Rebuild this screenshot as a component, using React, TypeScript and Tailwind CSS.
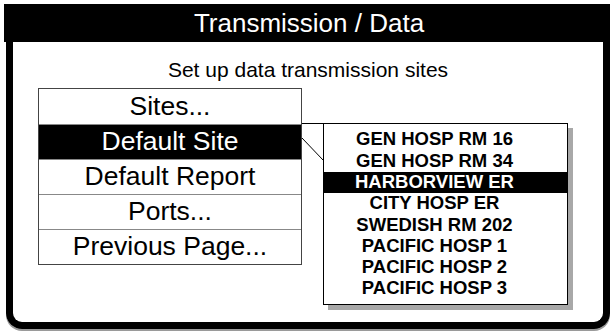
const menu = ["Sites...", "Default Site", "Default Report", "Ports...", "Previous Page..."];
const sites = [
  "GEN HOSP RM 16",
  "GEN HOSP RM 34",
  "HARBORVIEW ER",
  "CITY HOSP ER",
  "SWEDISH RM 202",
  "PACIFIC HOSP 1",
  "PACIFIC HOSP 2",
  "PACIFIC HOSP 3",
];

export default function App() {
  return (
    <div className="relative h-[331px] w-[610px] overflow-hidden bg-white font-['Liberation_Sans',Arial,sans-serif] text-black">
      <div className="ml-[4px] mt-[4px] flex h-[38px] w-[606px] items-center justify-center bg-black pl-[4px] text-[26px] text-white">
        Transmission / Data
      </div>
      <div className="ml-[6px] h-[287px] w-[604px] rounded-b-[16px] border-x-[7px] border-b-[7px] border-black shadow-[0_2px_0_#9a9a9a]">
        <div className="pt-[16px] text-center text-[21px] leading-[24px]">Set up data transmission sites</div>
        <div className="ml-[25px] mt-[6px] w-[264px] border border-[#444]">
          {menu.map((m, i) => (
            <div
              key={m}
              className={
                "flex h-[35px] items-center justify-center text-[26.5px] " +
                (i === 1 ? "bg-black text-white" : "") +
                (i > 0 ? " border-t border-[#888]" : "")
              }
            >
              {m}
            </div>
          ))}
        </div>
      </div>

      <svg className="absolute left-0 top-0" width="610" height="331">
        <line x1="302" y1="123.5" x2="324" y2="123.5" stroke="#000" strokeWidth="1" />
        <line x1="302" y1="138" x2="323" y2="160" stroke="#000" strokeWidth="1" />
      </svg>

      <div className="absolute left-[323px] top-[123px] h-[182px] w-[245px] border border-black bg-white pt-[5px] shadow-[5px_5px_0_#a8a8a8]">
        {sites.map((s, i) => (
          <div
            key={s}
            className={
              "flex h-[21.3px] items-center justify-center pr-[22px] text-[18.5px] font-bold leading-none " +
              (i === 2 ? "bg-black text-white" : "")
            }
          >
            {s}
          </div>
        ))}
      </div>
    </div>
  );
}
